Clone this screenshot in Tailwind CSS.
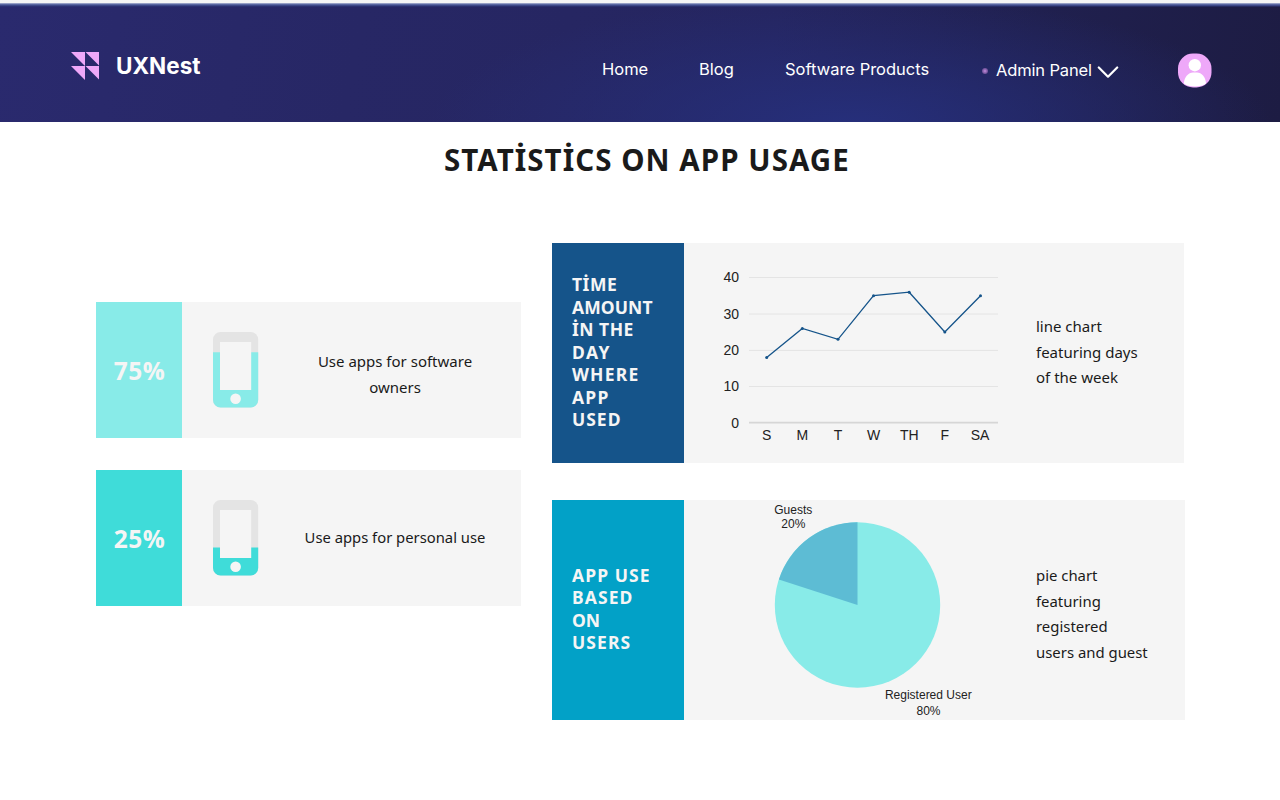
<!DOCTYPE html>
<html lang="en">
<head>
<meta charset="utf-8">
<title>UXNest – Statistics on app usage</title>
<script src="https://cdn.jsdelivr.net/npm/@tailwindcss/browser@4"></script>
</head>
<body class="h-[800px] w-[1280px] overflow-hidden bg-white font-['Noto_Sans',sans-serif] text-[#1a1a1a]">
<header class="h-[122px] bg-[linear-gradient(180deg,#f5f5f5_0px,#f5f5f5_2.5px,#6674ad_4px,#2f397b_6px,transparent_7px),radial-gradient(ellipse_420px_130px_at_850px_125px,#262f7b_0%,#262f7b00_100%),linear-gradient(100deg,#2a2a6e_0%,#272765_28%,#25255f_60%,#20204f_80%,#1d1c43_100%)] pt-[7px]">
  <nav class="flex h-[115px] items-start whitespace-nowrap text-white">
    <svg class="mt-[45px] ml-[71px] shrink-0" width="28" height="28" viewBox="0 0 28 28" fill="#eea8f9"><path d="M0 0H14V14ZM14.5 0H28V13.500ZM0 14H14V28ZM14.500 14H28V27.500Z"/></svg>
    <div class="mt-[44px] ml-[17px] w-[486px] shrink-0 font-['Inter',sans-serif] text-[22.500px] leading-[30px] font-bold">UXNest</div>
    <a class="mt-[50px] w-[97px] shrink-0 font-['Inter',sans-serif] text-[16.500px] leading-6">Home</a>
    <a class="mt-[50px] w-[86px] shrink-0 font-['Inter',sans-serif] text-[16.500px] leading-6">Blog</a>
    <a class="mt-[50px] w-[197px] shrink-0 font-['Inter',sans-serif] text-[16.500px] leading-6">Software Products</a>
    <span class="mt-[61px] size-[6px] shrink-0 rounded-full bg-[radial-gradient(circle,#c58ee0_0%,#8862ad_45%,#4b3b7f_100%)]"></span>
    <a class="mt-[51px] ml-[8px] w-[101px] shrink-0 font-['Inter',sans-serif] text-[16.500px] leading-6 tracking-[-0.150px]">Admin Panel</a>
    <svg class="mt-[59px] shrink-0" width="22" height="13" viewBox="0 0 22 13" fill="none" stroke="#fff" stroke-width="2.200" stroke-linecap="round" stroke-linejoin="round"><path d="M1.800 1.500L11 10.700L20.200 1.500"/></svg>
    <svg class="mt-[46px] ml-[59px] shrink-0" width="34" height="35" viewBox="0 0 34 35"><rect x="0" y="0.500" width="33.500" height="34" rx="15" fill="#eea8f9"/><circle cx="16.800" cy="12.200" r="6.200" fill="#fff"/><path d="M5.800 30.500C6.500 23.500 10.500 19.500 15 19.500H19C23.500 19.500 27.500 23.500 28 30.500C24 34.500 10 34.500 5.800 30.500Z" fill="#fff"/></svg>
  </nav>
</header>
<main>
  <h1 class="ml-[444px] h-[121px] pt-[17px] text-[29.500px] leading-[41px] font-bold tracking-[1.050px] whitespace-nowrap">STATİSTİCS ON APP USAGE</h1>
  <div class="flex pl-[96px]">
    <section class="flex w-[456px] flex-col gap-[32px] pt-[59px]">
      <article class="flex h-[136px] w-[425px] bg-[#f5f5f5]">
        <div class="flex w-[86px] items-center justify-center bg-[#88ebe8] pt-[3px] pl-[1px] font-['Open_Sans',sans-serif] text-[24.500px] font-bold tracking-[0.500px] text-[#f5f5f5]">75%</div>
        <svg class="mt-[29px] ml-[31px]" width="46" height="77" viewBox="0 0 46 77"><rect x="0" y="1" width="45.200" height="75.500" rx="7.500" fill="#e4e4e4"/><path d="M0 21.300H45.200V69A7.500 7.500 0 0 1 37.700 76.500H7.500A7.500 7.500 0 0 1 0 69Z" fill="#88ebe8"/><path d="M7 11H38.200V59H7Z" fill="#f5f5f5"/><circle cx="22.600" cy="67.800" r="5.300" fill="#f5f5f5"/></svg>
        <p class="ml-[36px] w-[200px] pt-[46px] text-center text-[15px] leading-[26px] whitespace-nowrap">Use apps for software<br>owners</p>
      </article>
      <article class="flex h-[136px] w-[425px] bg-[#f5f5f5]">
        <div class="flex w-[86px] items-center justify-center bg-[#3fdcd9] pt-[3px] pl-[1px] font-['Open_Sans',sans-serif] text-[24.500px] font-bold tracking-[0.500px] text-[#f5f5f5]">25%</div>
        <svg class="mt-[29px] ml-[31px]" width="46" height="77" viewBox="0 0 46 77"><rect x="0" y="1" width="45.200" height="75.500" rx="7.500" fill="#e4e4e4"/><path d="M0 48.500H45.200V69A7.500 7.500 0 0 1 37.700 76.500H7.500A7.500 7.500 0 0 1 0 69Z" fill="#3fdcd9"/><path d="M7 11H38.200V59H7Z" fill="#f5f5f5"/><circle cx="22.600" cy="67.800" r="5.300" fill="#f5f5f5"/></svg>
        <p class="ml-[36px] w-[200px] pt-[54px] text-center text-[14.800px] leading-[26px] whitespace-nowrap">Use apps for personal use</p>
      </article>
    </section>
    <section class="flex w-[633px] flex-col gap-[37px]">
      <article class="flex h-[220px] w-[632px] bg-[#f5f5f5]">
        <h2 class="w-[132px] bg-[#15548a] pt-[30px] pl-[20px] text-[17.500px] leading-[22.500px] font-bold tracking-[0.500px] whitespace-nowrap text-[#f5f5f5]"><span>TİME</span><br><span class="tracking-[0.100px]">AMOUNT</span><br>İN THE<br><span class="tracking-[1.500px]">DAY</span><br><span class="tracking-[1.200px]">WHERE</span><br><span class="tracking-[1.200px]">APP</span><br><span class="tracking-[1px]">USED</span></h2>
        <svg width="352" height="219" viewBox="684 243 352 219" font-family="Liberation Sans, sans-serif" font-size="14" fill="#222">
          <path d="M749 277.500H998M749 314H998M749 350.400H998M749 386.500H998" stroke="#e4e4e4"/>
          <path d="M749 422.700H998" stroke="#d6d6d6" stroke-width="1.700"/>
          <g text-anchor="end"><text x="739" y="282.300">40</text><text x="739" y="319.300">30</text><text x="739" y="355.300">20</text><text x="739" y="391.300">10</text><text x="739" y="428.300">0</text></g>
          <g text-anchor="middle"><text x="766.700" y="440">S</text><text x="802.300" y="440">M</text><text x="838" y="440">T</text><text x="873.500" y="440">W</text><text x="909.300" y="440">TH</text><text x="944.700" y="440">F</text><text x="980" y="440">SA</text></g>
          <path d="M766.700 357.500L802.300 328.400L838 339.300L873.500 295.700L909.200 292.200L944.800 332L980.500 295.700" fill="none" stroke="#15548a" stroke-width="1.300"/>
          <g fill="#15548a"><circle cx="766.700" cy="357.500" r="1.500"/><circle cx="802.300" cy="328.400" r="1.500"/><circle cx="838" cy="339.300" r="1.500"/><circle cx="873.500" cy="295.700" r="1.500"/><circle cx="909.200" cy="292.200" r="1.500"/><circle cx="944.800" cy="332" r="1.500"/><circle cx="980.500" cy="295.700" r="1.500"/></g>
        </svg>
        <p class="pt-[71px] text-[15px] leading-[25.700px] whitespace-nowrap">line chart<br>featuring days<br>of the week</p>
      </article>
      <article class="flex h-[220px] w-[633px] bg-[#f5f5f5]">
        <h2 class="w-[132px] bg-[#02a1c7] pt-[64px] pl-[20px] text-[17.500px] leading-[22.400px] font-bold tracking-[1.100px] whitespace-nowrap text-[#f5f5f5]">APP USE<br>BASED<br><span class="tracking-[0px]">ON</span><br>USERS</h2>
        <svg width="352" height="220" viewBox="684 500 352 220" font-family="Liberation Sans, sans-serif" font-size="12" fill="#222" text-anchor="middle">
          <circle cx="857.500" cy="605" r="82.700" fill="#88ebe8"/>
          <path d="M857.500 605V522.300A82.700 82.700 0 0 0 778.850 579.450Z" fill="#5dbcd4"/>
          <text x="793.300" y="514">Guests</text><text x="793.300" y="528.300">20%</text>
          <text x="928.300" y="699.300">Registered User</text><text x="928.500" y="715.300">80%</text>
        </svg>
        <p class="pt-[63px] text-[14.900px] leading-[25.700px] whitespace-nowrap">pie chart<br>featuring<br>registered<br>users and guest</p>
      </article>
    </section>
  </div>
</main>
</body>
</html>
